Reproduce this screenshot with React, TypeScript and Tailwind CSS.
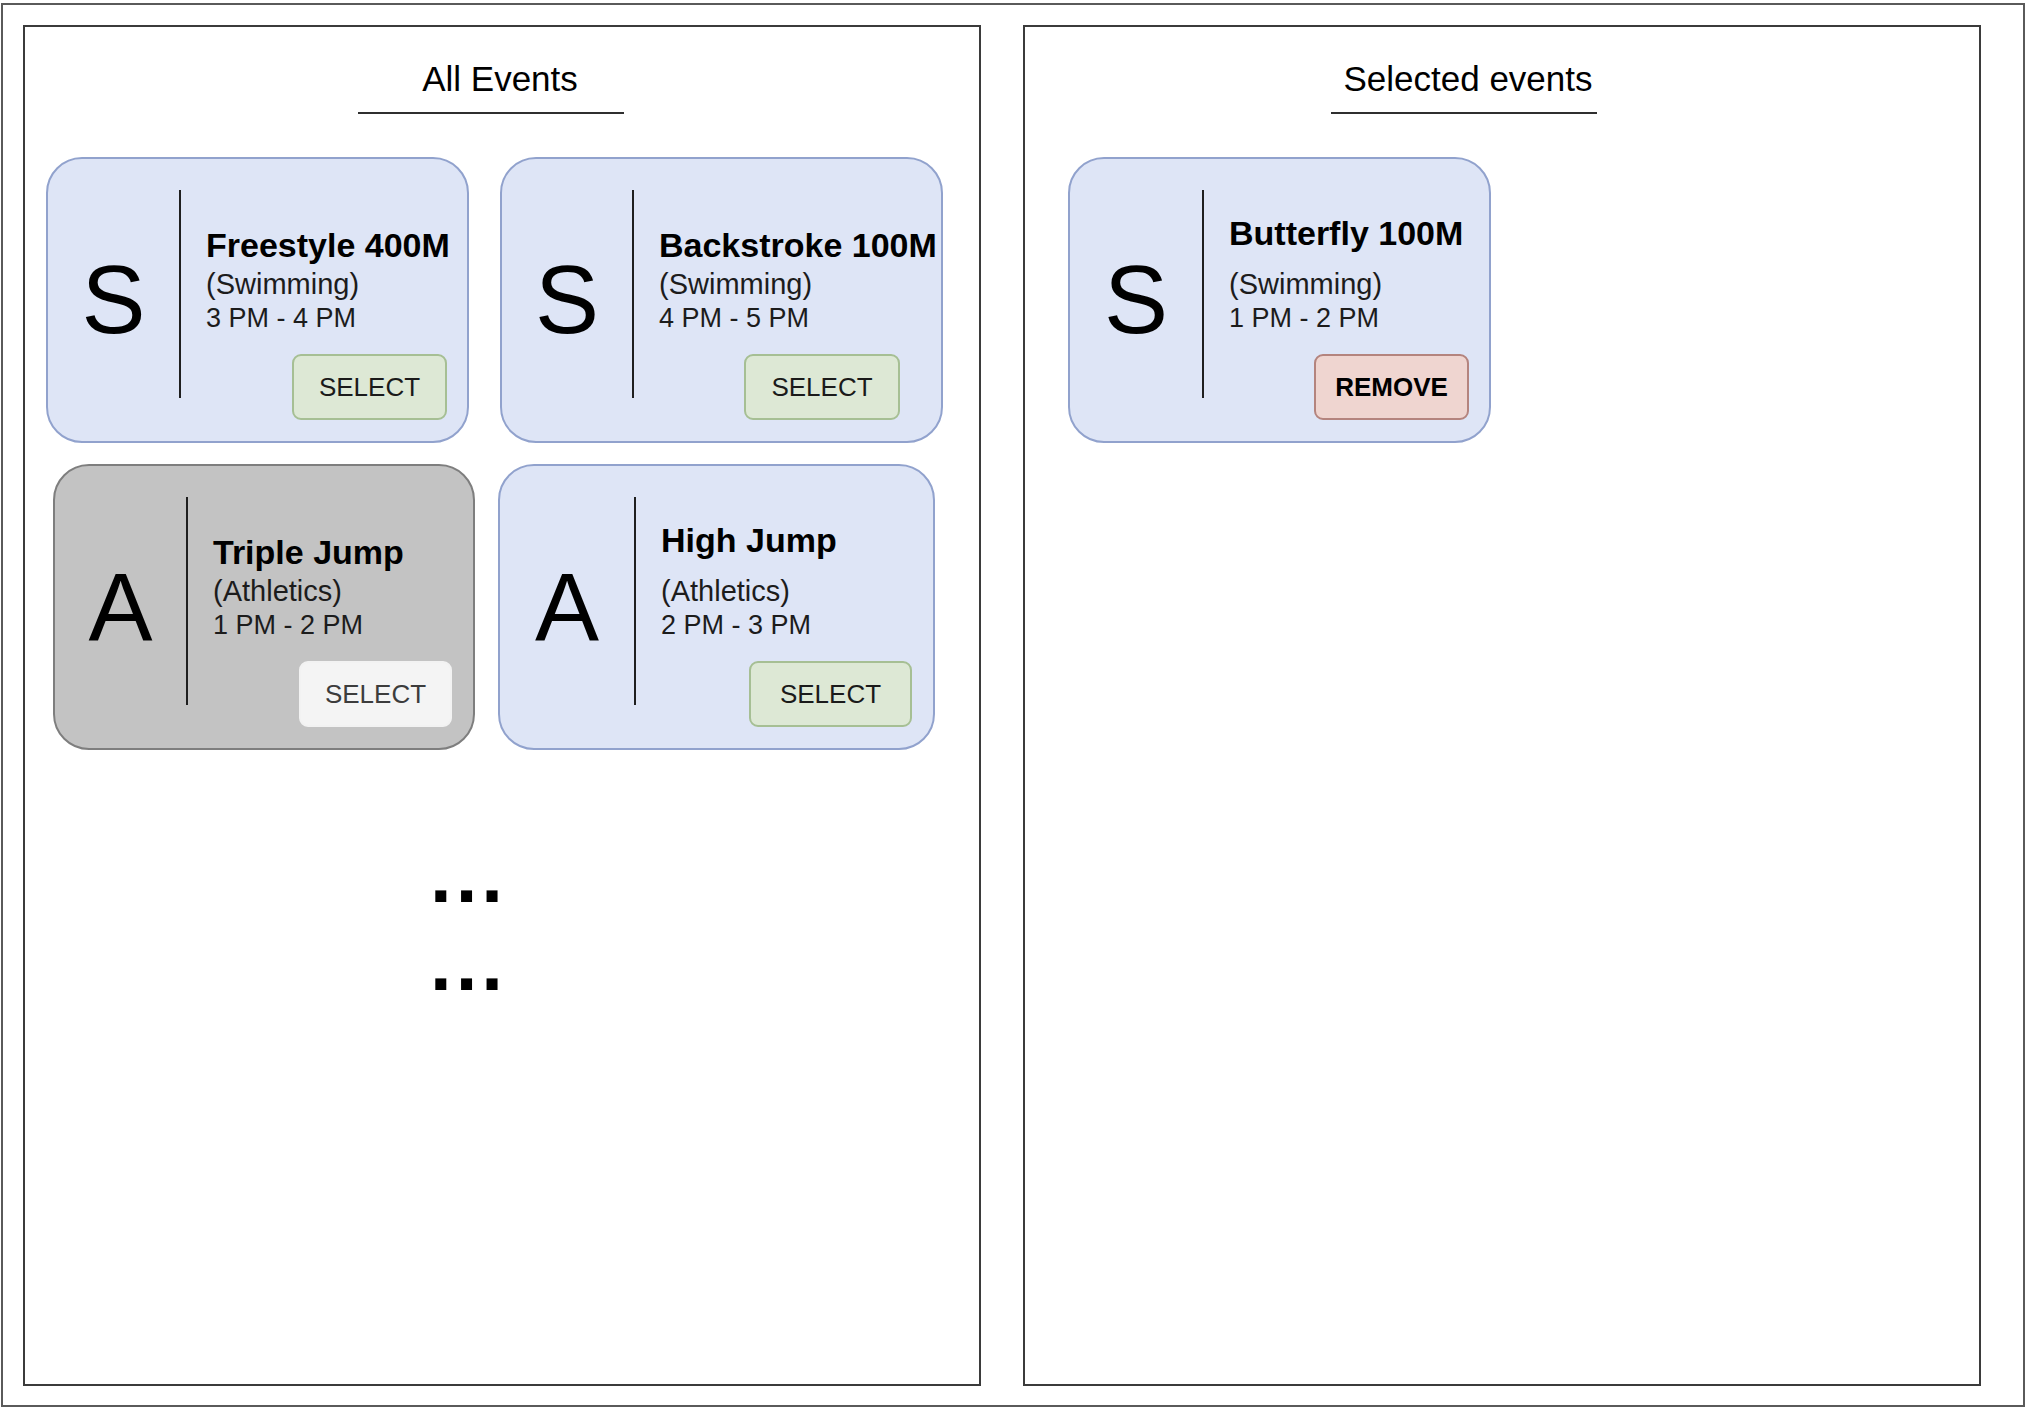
import clsx from "clsx";
import type { ReactNode } from "react";

type EventItem = {
  letter: string;
  title: string;
  sport: string;
  time: string;
  action: "select" | "remove";
  disabled?: boolean;
  raised?: boolean;
  // outer width + spacing for this card
  className: string;
  leadWidth?: string;
  buttonClass?: string;
};

const allEvents: EventItem[][] = [
  [
    {
      letter: "S",
      title: "Freestyle 400M",
      sport: "Swimming",
      time: "3 PM - 4 PM",
      action: "select",
      className: "ml-[21px] w-[423px]",
      buttonClass: "ml-[86px] w-[155px]",
    },
    {
      letter: "S",
      title: "Backstroke 100M",
      sport: "Swimming",
      time: "4 PM - 5 PM",
      action: "select",
      className: "ml-[31px] w-[443px]",
      leadWidth: "w-[130px]",
      buttonClass: "ml-[85px] w-[156px]",
    },
  ],
  [
    {
      letter: "A",
      title: "Triple Jump",
      sport: "Athletics",
      time: "1 PM - 2 PM",
      action: "select",
      disabled: true,
      className: "ml-[28px] w-[422px]",
      buttonClass: "ml-[86px] w-[153px]",
    },
    {
      letter: "A",
      title: "High Jump",
      sport: "Athletics",
      time: "2 PM - 3 PM",
      action: "select",
      raised: true,
      className: "ml-[23px] w-[437px]",
      leadWidth: "w-[134px]",
      buttonClass: "ml-[88px] w-[163px]",
    },
  ],
];

const selectedEvents: EventItem[] = [
  {
    letter: "S",
    title: "Butterfly 100M",
    sport: "Swimming",
    time: "1 PM - 2 PM",
    action: "remove",
    raised: true,
    className: "ml-[43px] w-[423px]",
    leadWidth: "w-[132px]",
    buttonClass: "ml-[85px] w-[155px]",
  },
];

function ActionButton({ ev }: { ev: EventItem }) {
  const styles =
    ev.action === "remove"
      ? "border-[#b4847e] bg-[#efd5d0] font-bold text-black"
      : ev.disabled
        ? "border-[#f2f2f2] bg-[#f4f4f4] text-[#3c3c3c]"
        : "border-[#a6bf94] bg-[#dde8d5] text-[#1a1a1a]";

  return (
    <button
      disabled={ev.disabled}
      className={clsx(
        "mt-[22px] flex h-[66px] shrink-0 items-center justify-center rounded-[9px] border-2 text-[26px] leading-none",
        styles,
        ev.buttonClass
      )}
    >
      {ev.action === "remove" ? "REMOVE" : "SELECT"}
    </button>
  );
}

function EventCard({ ev }: { ev: EventItem }) {
  return (
    <div
      className={clsx(
        "flex h-[286px] shrink-0 rounded-[36px] border-2",
        ev.disabled ? "border-[#7e7e7e] bg-[#c3c3c3]" : "border-[#91a2cd] bg-[#dee5f6]",
        ev.className
      )}
    >
      {/* Sport initial */}
      <div
        className={clsx(
          "flex shrink-0 items-center justify-center text-[96px] leading-none text-black",
          ev.leadWidth ?? "w-[131px]"
        )}
      >
        {ev.letter}
      </div>
      <div className="mt-[31px] h-[208px] w-[2px] shrink-0 bg-[#1f1f1f]" />

      {/* Details + action */}
      <div className={clsx("flex flex-col items-start pl-[25px]", ev.raised ? "pt-[57px]" : "pt-[69px]")}>
        <div className="whitespace-nowrap text-[34px] font-bold leading-[34px] text-black">{ev.title}</div>
        <div className={clsx("whitespace-nowrap text-[29px] leading-[29px] text-[#1c1c1c]", ev.raised ? "mt-[20px]" : "mt-[8px]")}>
          ({ev.sport})
        </div>
        <div className="mt-[6px] whitespace-nowrap text-[27px] leading-[27px] text-[#1c1c1c]">{ev.time}</div>
        <ActionButton ev={ev} />
      </div>
    </div>
  );
}

function Panel({
  title,
  titleShift,
  lineShift,
  children,
}: {
  title: string;
  titleShift?: string;
  lineShift?: string;
  children: ReactNode;
}) {
  return (
    <section className="flex h-[1361px] w-[958px] shrink-0 flex-col border-2 border-[#3b3b3b]">
      <div className="mt-[34px] flex flex-col items-center">
        <h2 className={clsx("text-[35px] leading-none text-black", titleShift)}>{title}</h2>
        <div className={clsx("mt-[16px] h-[2px] w-[266px] bg-[#2f2f2f]", lineShift)} />
      </div>
      {children}
    </section>
  );
}

export default function App() {
  return (
    <div className="h-[1408px] w-[2028px] bg-white pl-[1px] pt-[3px] font-['Liberation_Sans',Arial,sans-serif]">
      <div className="flex h-[1404px] w-[2024px] gap-[42px] border-2 border-[#5a5a5a] pl-[20px] pt-[20px]">
        {/* All events */}
        <Panel title="All Events" titleShift="mr-[4px]" lineShift="mr-[22px]">
          <div className="mt-[43px] flex flex-col gap-[21px]">
            {allEvents.map((row, i) => (
              <div key={i} className="flex">
                {row.map((ev) => (
                  <EventCard key={ev.title} ev={ev} />
                ))}
              </div>
            ))}
          </div>
          <div className="ml-[405px] mt-[86px] flex flex-col gap-[10px] text-[78px] font-bold leading-[78px] tracking-[4px] text-black">
            <span>...</span>
            <span>...</span>
          </div>
        </Panel>

        {/* Selected events */}
        <Panel title="Selected events" titleShift="mr-[68px]" lineShift="mr-[76px]">
          <div className="mt-[43px] flex">
            {selectedEvents.map((ev) => (
              <EventCard key={ev.title} ev={ev} />
            ))}
          </div>
        </Panel>
      </div>
    </div>
  );
}
